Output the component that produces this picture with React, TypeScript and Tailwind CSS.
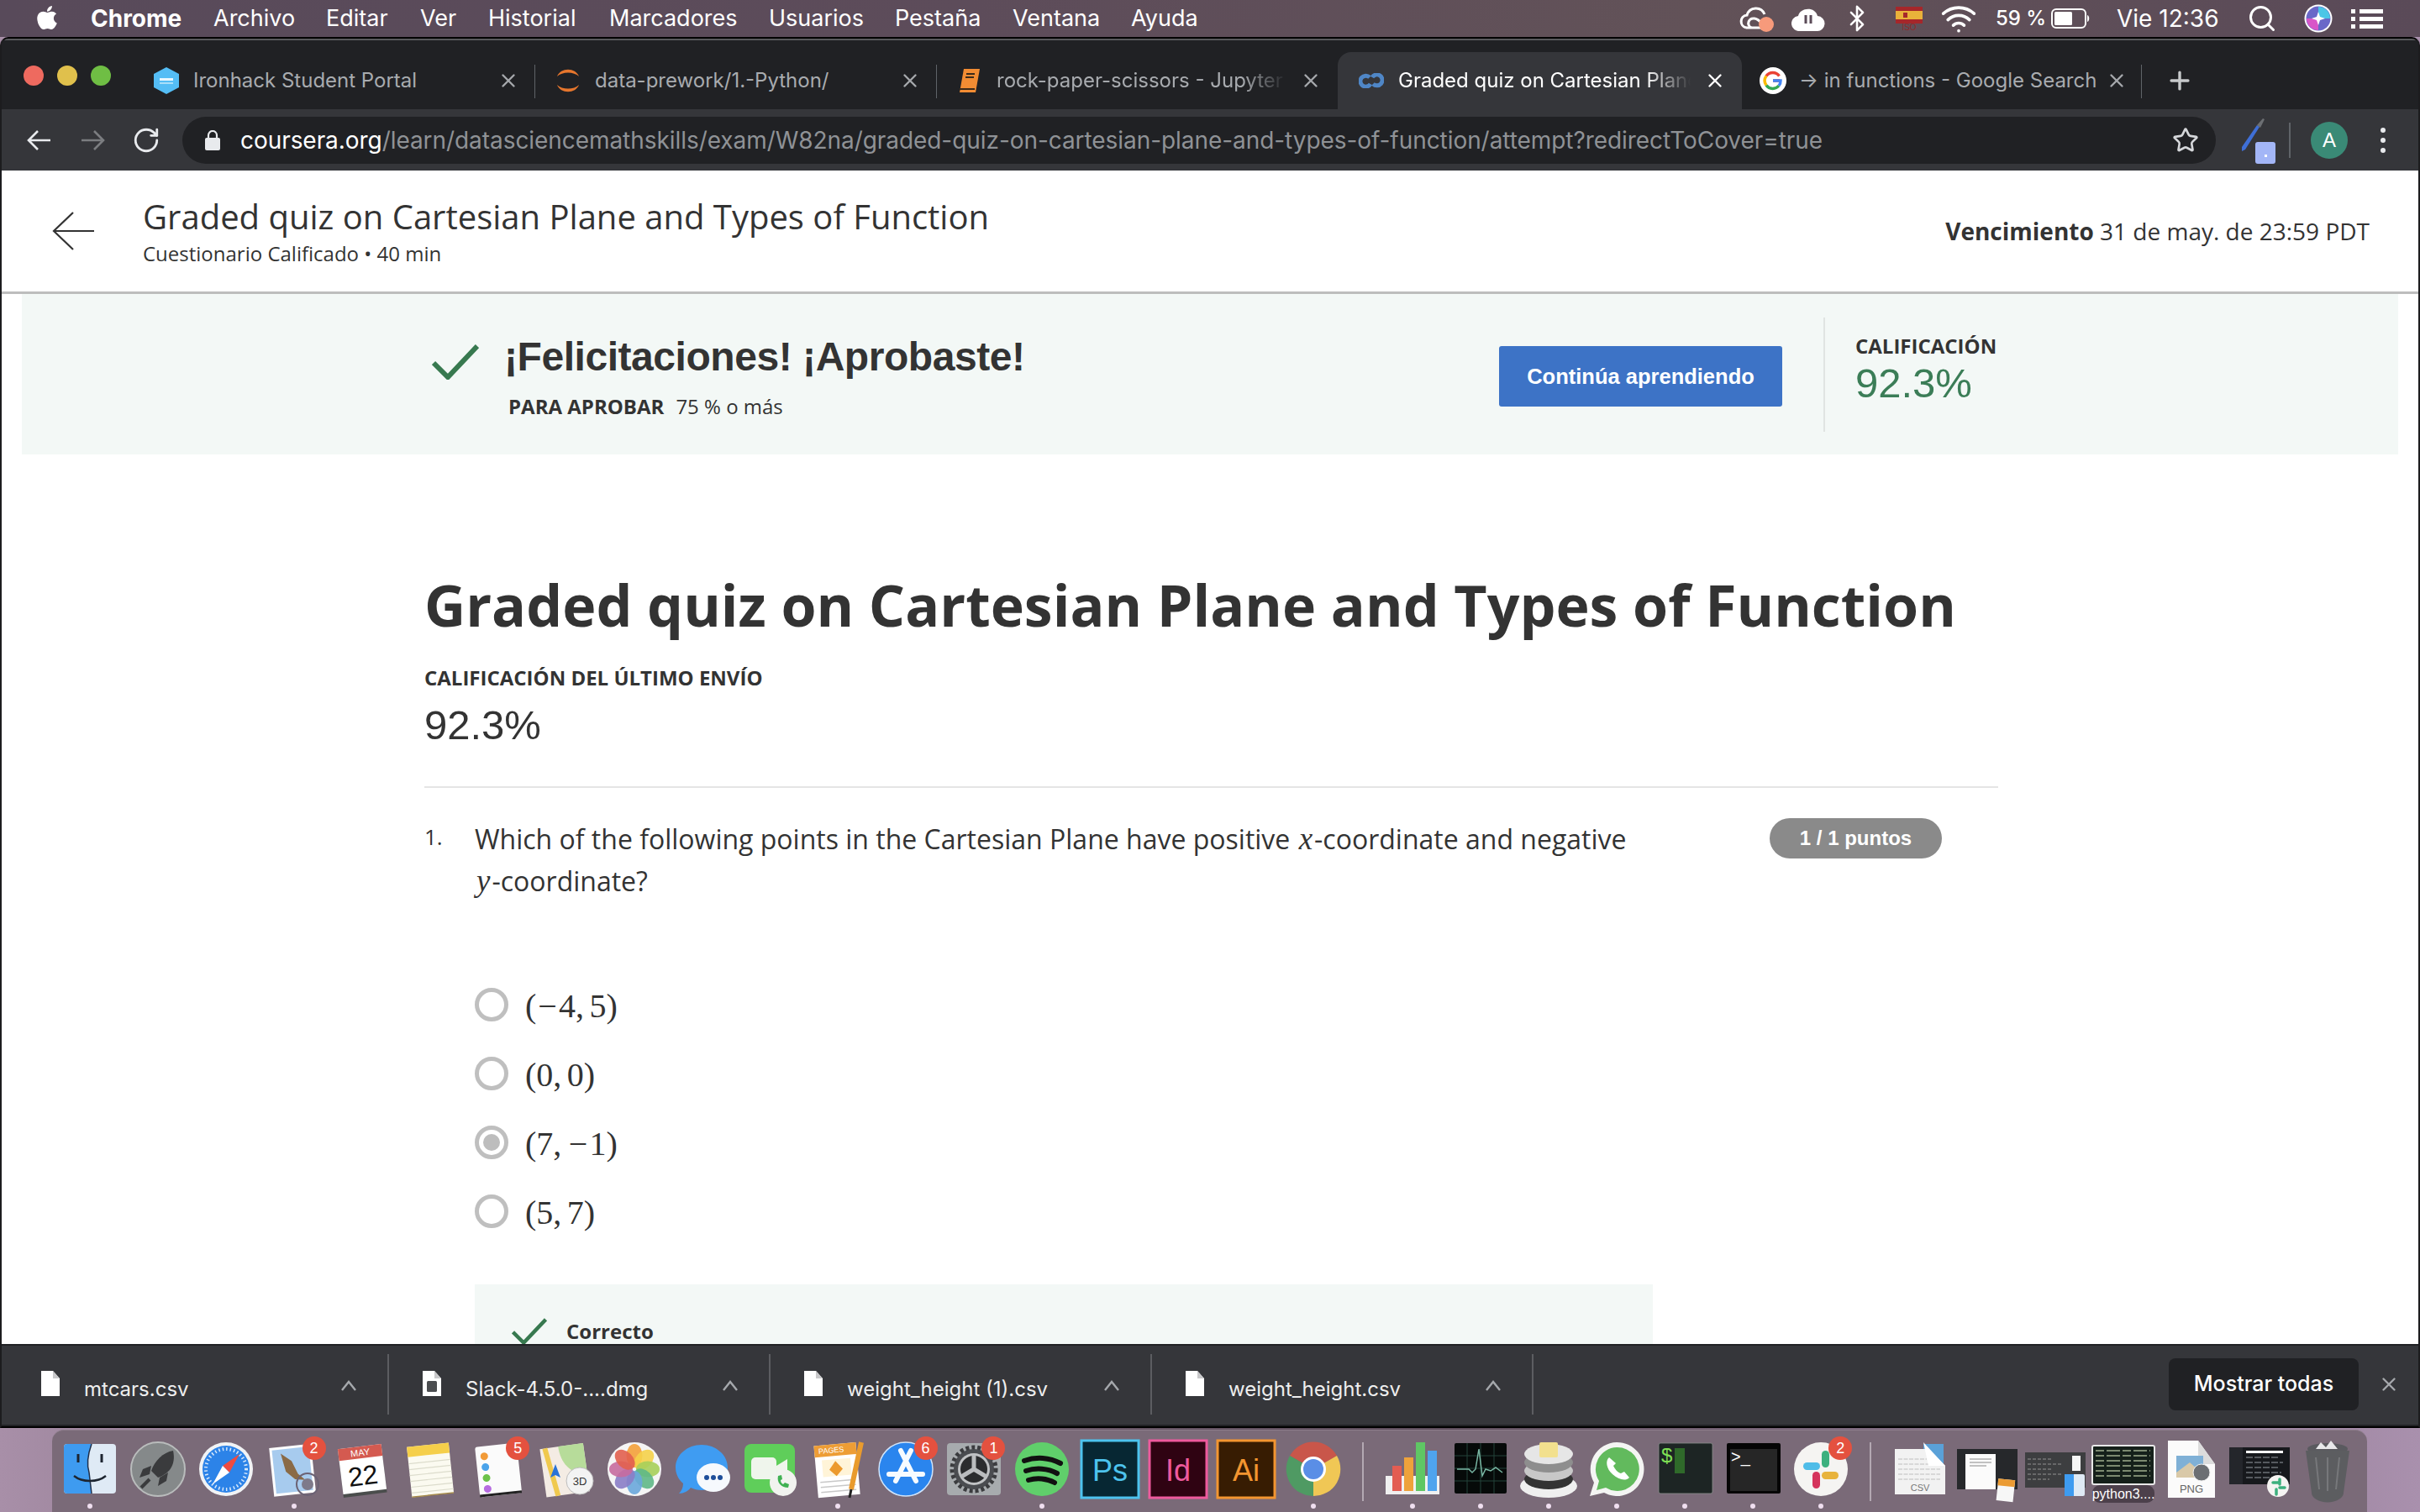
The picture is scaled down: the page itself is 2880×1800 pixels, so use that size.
import React from "react";
import { FaApple } from "react-icons/fa";
import { RotateCw, Star, Bluetooth, Wifi, Search, Plus } from "lucide-react";

const sf = "font-['Inter','Liberation_Sans',sans-serif]";
const open = "font-['Open_Sans',sans-serif]";
const arial = "font-['Liberation_Sans',Arial,sans-serif]";
const mathI = "font-['Liberation_Serif',serif] italic text-[37px] leading-[30px] mx-[2px]";

function CloseX({ light }: { light?: boolean }) {
  return (
    <svg width="20" height="20" viewBox="0 0 20 20" fill="none" stroke={light ? "#ffffff" : "#a5a8ac"} strokeWidth="2.4" strokeLinecap="round">
      <path d="M3.5 3.5 16.5 16.5M16.5 3.5 3.5 16.5" />
    </svg>
  );
}

function NavArrow({ color, flip }: { color: string; flip?: boolean }) {
  return (
    <svg width="28" height="24" viewBox="0 0 28 24" fill="none" stroke={color} strokeWidth="2.6" className={flip ? "scale-x-[-1]" : ""}>
      <path d="M13 1 2 12l11 11M2 12h26" />
    </svg>
  );
}

function Tab({ icon, title, active, divider, fade, iconWidth = 30, gap = 17, pad = 24, width = 478, close = 22 }: any) {
  return (
    <div className={`relative flex h-[68px] shrink-0 items-center ${active ? "rounded-t-[16px] bg-[#35363a] text-white" : "text-[#a8abaf]"}`} style={{ width, paddingLeft: pad, paddingRight: close }}>
      <div className="flex shrink-0 items-center justify-center" style={{ width: iconWidth, marginRight: gap }}>{icon}</div>
      <div className={`min-w-0 flex-1 overflow-hidden whitespace-nowrap text-[24px] ${sf} ${fade ? "[mask-image:linear-gradient(to_right,black_82%,transparent_97%)]" : ""}`}>{title}</div>
      <div className="ml-2 shrink-0"><CloseX light={active} /></div>
      {divider && <div className="absolute right-0 top-[15px] h-[40px] w-[1px] bg-[#5f6368]" />}
    </div>
  );
}

function FileIcon({ detail }: { detail?: boolean }) {
  return (
    <svg width="22" height="30" viewBox="0 0 22 30">
      <path d="M0 0H14L22 9V30H0Z" fill="#fff" />
      <path d="M14 0V9H22Z" fill="#c8c8ca" />
      {detail && <rect x="5" y="12" width="12" height="13" rx="1.5" fill="#4b4d50" />}
    </svg>
  );
}

function DownloadItem({ name, detail }: { name: string; detail?: boolean }) {
  return (
    <div className="flex h-[72px] w-[454px] shrink-0 items-center border-r-2 border-[#5c5d61] pl-[40px] pr-[36px]">
      <div className="mb-[2px] w-[22px] shrink-0"><FileIcon detail={detail} /></div>
      <div className={`ml-[29px] mt-[12px] flex-1 text-[24px] text-[#eeeeee] ${sf}`}>{name}</div>
      <svg width="20" height="13" viewBox="0 0 20 13" fill="none" stroke="#a5a8ac" strokeWidth="2.4" className="mt-[2px]"><path d="M2 12 10 2l8 10" /></svg>
    </div>
  );
}

function Minus() {
  return <span className="mx-[2px]">−</span>;
}

function Option({ label, checked }: { label: React.ReactNode; checked?: boolean }) {
  return (
    <div className="mb-[42px] flex h-10 items-center">
      <div className="flex h-10 w-10 shrink-0 items-center justify-center rounded-full border-[5px] border-[#bfbfbf]">
        {checked && <div className="h-5 w-5 rounded-full bg-[#bdbdbd]" />}
      </div>
      <div className="ml-[20px] mt-[3px] font-['Liberation_Serif',serif] text-[40px] leading-none text-[#333333] [word-spacing:-3.5px]">{label}</div>
    </div>
  );
}

function Check({ w, h, sw }: { w: number; h: number; sw: number }) {
  return (
    <svg width={w} height={h} viewBox="0 0 56 42" fill="none" stroke="#37794f" strokeWidth={sw}>
      <path d="M2 22 19 39 54 2" />
    </svg>
  );
}

function DockItem({ children, badge, dot }: { children: React.ReactNode; badge?: string; dot?: boolean }) {
  return (
    <div className="relative flex h-full w-[80.9px] shrink-0 justify-center pt-[10px]">
      <svg width="72" height="72" viewBox="0 0 72 72" className="overflow-visible">{children}</svg>
      {badge && (
        <div className={`absolute right-[3px] top-[7px] flex h-[28px] w-[28px] items-center justify-center rounded-full bg-[#e4513f] text-[18px] text-white ${arial}`}>{badge}</div>
      )}
      {dot && <div className="absolute bottom-[4px] left-1/2 h-[6px] w-[6px] -translate-x-1/2 rounded-full bg-[#f0dff0]" />}
    </div>
  );
}

function DockDivider() {
  return (
    <div className="flex h-full w-[37px] shrink-0 justify-center pt-[14px]">
      <div className="h-[70px] w-[2px] bg-[#b3a8b2]" />
    </div>
  );
}

const T = (p: any) => <text fontFamily="Liberation Sans, Arial, sans-serif" {...p} />;

export default function App() {
  return (
    <div className="flex h-[1800px] w-[2880px] flex-col overflow-hidden bg-[linear-gradient(90deg,#a88fa8_0%,#7a6678_20%,#5e4e5c_60%,#a990ad_100%)]">
      {/* macOS menu bar */}
      <div className={`flex h-[44px] shrink-0 items-center bg-[linear-gradient(90deg,#584a5a,#5d4c5a_40%,#625258_70%,#5a4a58)] text-[27px] text-white ${sf}`}>
        <div className="mb-[3px] ml-[40px] w-[30px]"><FaApple size={32} color="#fff" /></div>
        <div className="ml-[38px] w-[109px] text-[28px] font-bold">Chrome</div>
        <div className="ml-[37px] w-[96px]">Archivo</div>
        <div className="ml-[38px] w-[75px]">Editar</div>
        <div className="ml-[37px] w-[43px]">Ver</div>
        <div className="ml-[38px] w-[106px]">Historial</div>
        <div className="ml-[38px] w-[152px]">Marcadores</div>
        <div className="ml-[38px] w-[112px]">Usuarios</div>
        <div className="ml-[38px] w-[101px]">Pestaña</div>
        <div className="ml-[39px] w-[103px]">Ventana</div>
        <div className="ml-[38px] w-[79px]">Ayuda</div>
        <div className="ml-auto flex items-center pr-[44px]">
          <svg width="42" height="34" viewBox="0 0 42 34" fill="none" stroke="#fff" strokeWidth="3">
            <path d="M8 28C0 26 0 14 9 13 12 3 26 2 30 12" />
            <path d="M14 28c-6-4-3-12 4-11 6 1 8 6 10 8" />
            <path d="M8 28h20" />
            <circle cx="32" cy="24" r="9" fill="#f79a7b" stroke="none" />
          </svg>
          <svg width="40" height="30" viewBox="0 0 40 30" className="ml-[20px]">
            <path d="M10 30a9 9 0 0 1-2-18C10 2 28 0 31 12a9 9 0 0 1-1 18Z" fill="#fff" />
            <path d="M17 11v10M23 11v10" stroke="#5b4b58" strokeWidth="3" />
          </svg>
          <Bluetooth size={34} color="#fff" strokeWidth={1.8} className="ml-[21px]" />
          <div className="ml-[29px] flex w-[32px] flex-col items-center">
            <svg width="32" height="20" viewBox="0 0 32 20">
              <rect width="32" height="20" fill="#a6272a" />
              <rect y="5" width="32" height="10" fill="#e9b23a" />
              <rect x="9" y="7" width="5" height="6" fill="#a6272a" />
            </svg>
            <div className={`h-[8px] text-[10px] leading-[10px] text-[#8e2a2a] ${arial}`}>ISO</div>
          </div>
          <Wifi size={44} color="#fff" strokeWidth={2} className="ml-[21px]" />
          <div className="ml-[22px] w-[58px] whitespace-nowrap text-[24px] font-medium">59 %</div>
          <svg width="46" height="24" viewBox="0 0 46 24" className="ml-[8px]">
            <rect x="1" y="1" width="40" height="22" rx="5" fill="none" stroke="#fff" strokeWidth="2" />
            <rect x="4" y="4" width="21" height="16" rx="1.5" fill="#fff" />
            <path d="M43 8c3 1 3 7 0 8Z" fill="#fff" />
          </svg>
          <div className="ml-[32px] w-[119px] whitespace-nowrap text-[28px]">Vie 12:36</div>
          <Search size={36} color="#fff" strokeWidth={2} className="ml-[36px]" />
          <svg width="34" height="34" viewBox="0 0 34 34" className="ml-[32px]">
            <circle cx="17" cy="17" r="16.5" fill="#fff" />
            <circle cx="17" cy="17" r="14.5" fill="#6a68c8" />
            <path d="M17 3A14 14 0 0 1 31 17L17 17Z" fill="#4cc6e6" />
            <path d="M3 17A14 14 0 0 0 17 31L17 17Z" fill="#d856c8" />
            <path d="M17 9l2 6 6 2-6 2-2 6-2-6-6-2 6-2Z" fill="#fff" />
          </svg>
          <svg width="38" height="24" viewBox="0 0 38 24" fill="#fff" className="ml-[22px]">
            <rect x="0" y="1" width="5" height="5" /><rect x="10" y="1" width="28" height="5" />
            <rect x="0" y="10" width="5" height="5" /><rect x="10" y="10" width="28" height="5" />
            <rect x="0" y="19" width="5" height="5" /><rect x="10" y="19" width="28" height="5" />
          </svg>
        </div>
      </div>

      {/* Browser window */}
      <div className="flex h-[1656px] shrink-0 flex-col overflow-hidden rounded-t-[10px] border-x-2 border-y-2 border-x-[#1c1c1e] border-y-black bg-[#202124]">
        {/* tab strip */}
        <div className="flex h-[84px] shrink-0 items-end border-t-[2px] border-[#58595c] bg-[#202124]">
          <div className="flex h-[68px] w-[157px] shrink-0 items-center gap-[16px] pb-[12px] pl-[26px]">
            <div className="h-[24px] w-[24px] rounded-full bg-[#ee6a5f]" />
            <div className="h-[24px] w-[24px] rounded-full bg-[#e0c04c]" />
            <div className="h-[24px] w-[24px] rounded-full bg-[#6fbe44]" />
          </div>
          <Tab
            title="Ironhack Student Portal"
            divider
            icon={
              <svg width="30" height="32" viewBox="0 0 30 32">
                <path d="M15 0 30 8v16l-15 8L0 24V8Z" fill="#54bdf5" />
                <rect x="7" y="13" width="16" height="3" fill="#e8f7ff" />
                <rect x="7" y="18" width="16" height="2" fill="#a9def9" />
              </svg>
            }
          />
          <Tab
            title="data-prework/1.-Python/"
            divider
            icon={
              <svg width="30" height="32" viewBox="0 0 30 32" fill="#e6762d">
                <path d="M2 11C6 0 24 0 28 11 22 5 8 5 2 11Z" />
                <path d="M2 21C6 32 24 32 28 21 22 27 8 27 2 21Z" />
              </svg>
            }
          />
          <Tab
            title="rock-paper-scissors - Jupyter Notebook"
            fade
            width={477}
            icon={
              <svg width="26" height="30" viewBox="0 0 26 30">
                <path d="M6 1H25L20 29H1Z" fill="#f28c33" />
                <path d="M9 7h10M8 11h10" stroke="#3b2a1a" strokeWidth="2" />
                <path d="M1 25h18" stroke="#3b2a1a" strokeWidth="2" />
              </svg>
            }
          />
          <Tab
            active
            fade
            title="Graded quiz on Cartesian Plane and Types of Function"
            width={481}
            pad={25}
            icon={
              <svg width="30" height="18" viewBox="0 0 30 18" fill="none" stroke="#4f86c6" strokeWidth="5">
                <path d="M13 5a6.5 6.5 0 1 0 1 8M17 13a6.5 6.5 0 1 0-1-8" />
              </svg>
            }
          />
          <Tab
            title="→ in functions - Google Search"
            divider
            pad={21}
            iconWidth={32}
            gap={15}
            width={476}
            close={20}
            icon={
              <svg width="32" height="32" viewBox="0 0 32 32">
                <circle cx="16" cy="16" r="16" fill="#fff" />
                <path d="M24 16h-8M23.5 10.5A9.5 9.5 0 0 0 8 10.5" fill="none" stroke="#ea4335" strokeWidth="3.5" />
                <path d="M8 10.5a9.5 9.5 0 0 0 0 11" fill="none" stroke="#fbbc05" strokeWidth="3.5" />
                <path d="M8 21.5a9.5 9.5 0 0 0 15 .5" fill="none" stroke="#34a853" strokeWidth="3.5" />
                <path d="M23 22a9 9 0 0 0 2-6h-9" fill="none" stroke="#4285f4" strokeWidth="3.5" />
              </svg>
            }
          />
          <div className="flex h-[68px] items-center pl-[28px]"><Plus size={34} color="#c8cacc" strokeWidth={2.4} /></div>
        </div>
        {/* toolbar */}
        <div className="flex h-[73px] shrink-0 items-center bg-[#35363a]">
          <div className="ml-[30px]"><NavArrow color="#e8eaed" /></div>
          <div className="ml-[37px]"><NavArrow color="#7b7d80" flip /></div>
          <RotateCw size={34} color="#e8eaed" strokeWidth={2} className="ml-[32px]" />
          <div className={`ml-[26px] flex h-[56px] w-[2420px] shrink-0 items-center rounded-full bg-[#202124] pl-[27px] pr-[20px] ${sf}`}>
            <svg width="18" height="24" viewBox="0 0 18 24" fill="#e8eaed">
              <rect x="0" y="9" width="18" height="15" rx="2" />
              <path d="M4 10V6a5 5 0 0 1 10 0v4" fill="none" stroke="#e8eaed" strokeWidth="2.2" />
            </svg>
            <div className="ml-[24px] flex-1 whitespace-nowrap text-[28px] tracking-[-0.06px] text-[#8f9296]">
              <span className="text-white">coursera.org</span>/learn/datasciencemathskills/exam/W82na/graded-quiz-on-cartesian-plane-and-types-of-function/attempt?redirectToCover=true
            </div>
            <Star size={32} color="#d5d7da" strokeWidth={2} />
          </div>
          <svg width="44" height="56" viewBox="0 0 44 56" className="ml-[28px]">
            <path d="M3 36 21 10l3 2L7 39l-4 2Z" fill="#3f6fd6" />
            <path d="M21 10l7-8 2 1-5 10Z" fill="#6c6f73" />
            <rect x="19" y="30" width="24" height="26" rx="3" fill="#a3b6f7" />
            <rect x="30" y="45" width="3" height="3" fill="#fff" />
          </svg>
          <div className="ml-[15px] h-[42px] w-[2px] bg-[#5f6368]" />
          <div className={`ml-[24px] flex h-[44px] w-[44px] items-center justify-center rounded-full bg-[#3a8a76] text-[24px] text-white ${arial}`}>A</div>
          <div className="ml-[39px] flex flex-col gap-[6px]">
            <div className="h-[6px] w-[6px] rounded-full bg-[#e8eaed]" />
            <div className="h-[6px] w-[6px] rounded-full bg-[#e8eaed]" />
            <div className="h-[6px] w-[6px] rounded-full bg-[#e8eaed]" />
          </div>
        </div>

        {/* Page */}
        <div className={`h-[1397px] shrink-0 overflow-hidden bg-white text-[#333333] ${open}`}>
          {/* header */}
          <div className="flex h-[147px] items-center border-b-[3px] border-[#bdbdbd] pl-[60px] pr-[58px]">
            <svg width="50" height="46" viewBox="0 0 50 46" fill="none" stroke="#333" strokeWidth="2.2">
              <path d="M25 1 2 23l23 22M2 23h48" />
            </svg>
            <div className="ml-[58px] flex-1">
              <div className="text-[40px] leading-[50px]">Graded quiz on Cartesian Plane and Types of Function</div>
              <div className="mt-[3px] text-[24px] leading-[32px]">Cuestionario Calificado • 40 min</div>
            </div>
            <div className="text-[28px]"><span className="font-bold">Vencimiento</span> 31 de may. de 23:59 PDT</div>
          </div>
          {/* banner */}
          <div className="mx-[24px] flex h-[191px] items-center bg-[#f3f8f6] pl-[488px] pr-[446px]">
            <div className="mb-[30px] w-[56px] shrink-0"><Check w={56} h={42} sw={6} /></div>
            <div className="ml-[30px] flex-1">
              <div className={`mt-[4px] text-[48px] font-bold leading-[60px] tracking-[-0.45px] ${arial}`}>¡Felicitaciones! ¡Aprobaste!</div>
              <div className="ml-[5px] mt-[12px] text-[24px] leading-[34px]"><span className="font-bold">PARA APROBAR</span><span className="ml-[14px]">75 % o más</span></div>
            </div>
            <div className={`mt-[5px] flex h-[72px] w-[337px] shrink-0 items-center justify-center rounded-[3px] bg-[#3d73c6] text-[25.5px] font-bold text-white ${arial}`}>Continúa aprendiendo</div>
            <div className="ml-[49px] h-[136px] w-[2px] shrink-0 bg-[#e0e4e2]" />
            <div className="mb-[14px] ml-[36px] w-[200px] shrink-0">
              <div className="text-[24px] font-bold leading-[32px]">CALIFICACIÓN</div>
              <div className={`mt-[3px] text-[49px] leading-[50px] text-[#3b7d57] ${arial}`}>92.3%</div>
            </div>
          </div>
          {/* main */}
          <div className="pl-[503px] pr-[500px]">
            <div className="mt-[134px] whitespace-nowrap text-[68px] font-bold leading-[90px]">Graded quiz on Cartesian Plane and Types of Function</div>
            <div className="mt-[25px] text-[24px] font-bold leading-[34px]">CALIFICACIÓN DEL ÚLTIMO ENVÍO</div>
            <div className={`mt-[9px] text-[49px] leading-[60px] ${arial}`}>92.3%</div>
            <div className="mt-[43px] h-[2px] bg-[#e5e5e5]" />
            <div className="mt-[36px] flex items-start">
              <div className="mt-[-3px] w-[60px] shrink-0 text-[26px] leading-[50px]">1.</div>
              <div className="w-[1402px] shrink-0 text-[32px] leading-[50px]">
                Which of the following points in the Cartesian Plane have positive <i className={mathI}>x</i>-coordinate and negative <span className="whitespace-nowrap"><i className={mathI}>y</i>-coordinate?</span>
              </div>
              <div className={`ml-[139px] flex h-[48px] w-[205px] shrink-0 items-center justify-center rounded-full bg-[#8a8a8a] text-[24px] font-bold text-white ${arial}`}>1 / 1 puntos</div>
            </div>
            <div className="ml-[60px] mt-[102px]">
              <Option label={<>(<Minus />4, 5)</>} />
              <Option label="(0, 0)" />
              <Option label={<>(7, <Minus />1)</>} checked />
              <Option label="(5, 7)" />
              <div className="mt-[67px] flex h-[120px] w-[1402px] items-start bg-[#f3f8f6] pl-[44px] pt-[40px]">
                <Check w={42} h={32} sw={6} />
                <div className="ml-[23px] text-[24px] font-bold leading-[32px]">Correcto</div>
              </div>
            </div>
          </div>
        </div>

        {/* Download bar */}
        <div className="flex h-[96px] shrink-0 items-center border-t-2 border-[#202124] bg-[#35363a] pb-[2px]">
          <div className="w-[7px]" />
          <DownloadItem name="mtcars.csv" />
          <DownloadItem name="Slack-4.5.0-....dmg" detail />
          <DownloadItem name="weight_height (1).csv" />
          <DownloadItem name="weight_height.csv" />
          <div className={`ml-auto flex h-[62px] w-[226px] items-center justify-center rounded-[8px] bg-[#202124] text-[25px] font-medium text-white ${sf}`}>Mostrar todas</div>
          <div className="ml-[26px] mr-[25px]"><CloseX /></div>
        </div>
      </div>

      {/* Dock */}
      <div className="ml-[62px] mr-[63px] mt-[2px] flex h-[98px] shrink-0 overflow-hidden rounded-t-[14px] border-t border-[#8d7d8b] bg-[#7a6a78] pl-[5px]">
        <DockItem dot>
          <rect x="5" y="6" width="62" height="59" rx="4" fill="#dfeaf5" />
          <path d="M9 6H38C33 20 32 30 35 40L38 65H9a4 4 0 0 1-4-4V10a4 4 0 0 1 4-4Z" fill="#3e9bf0" />
          <path d="M38 6C33 20 32 30 35 40L38 65" stroke="#1f2f4a" strokeWidth="1.5" fill="none" />
          <path d="M22 18v10M50 18v10" stroke="#1d2530" strokeWidth="3" />
          <path d="M17 44c10 8 28 8 38 0" stroke="#1d2530" strokeWidth="2.5" fill="none" />
        </DockItem>
        <DockItem>
          <circle cx="36" cy="36" r="32" fill="#85898a" />
          <circle cx="36" cy="36" r="32" fill="none" stroke="#b9bcbc" strokeWidth="2" />
          <path d="M54 14C42 16 32 26 28 38l8 8c12-4 22-14 18-32Z" fill="#3a3b3d" />
          <path d="M28 32l-10 4-4 10 12-4ZM38 46l-2 10 10-6 2-10Z" fill="#3a3b3d" />
          <path d="M26 48 16 58" stroke="#3a3b3d" strokeWidth="4" />
        </DockItem>
        <DockItem>
          <circle cx="36" cy="36" r="32" fill="#f1f3f5" />
          <circle cx="36" cy="36" r="28" fill="#2c83e8" />
          <circle cx="36" cy="36" r="24" fill="none" stroke="#d7e8fb" strokeWidth="4" strokeDasharray="1.5 3" />
          <path d="M52 18 32 32 40 40Z" fill="#ef4b40" />
          <path d="M20 54 32 32 40 40Z" fill="#fff" />
        </DockItem>
        <DockItem badge="2" dot>
          <g transform="rotate(-6 36 36)">
            <rect x="9" y="8" width="50" height="58" fill="#fdfdfd" />
            <rect x="12" y="11" width="44" height="52" fill="#a7cbee" />
            <path d="M22 16 34 26 40 42 48 50 36 48 26 38Z" fill="#8a6a46" />
          </g>
          <circle cx="52" cy="54" r="13" fill="none" stroke="#6b6274" strokeWidth="2" />
          <circle cx="52" cy="54" r="7" fill="#7e7a8a" />
        </DockItem>
        <DockItem>
          <g transform="rotate(-7 36 36)">
            <rect x="10" y="11" width="52" height="56" fill="#4a4d4c" />
            <rect x="10" y="9" width="52" height="54" fill="#fff" />
            <rect x="10" y="9" width="52" height="14" fill="#d45a50" />
            <T x="36" y="20" fontSize="11" fill="#fff" textAnchor="middle">MAY</T>
            <T x="36" y="55" fontSize="32" fill="#111" textAnchor="middle">22</T>
          </g>
        </DockItem>
        <DockItem>
          <g transform="rotate(-6 36 36)">
            <rect x="11" y="7" width="50" height="60" fill="#fbfaf0" />
            <rect x="11" y="7" width="50" height="12" fill="#f5cf4a" />
            <path d="M11 27H61M11 34H61M11 41H61M11 48H61M11 55H61M11 62H61" stroke="#dcdccc" strokeWidth="1.2" />
            <rect x="11" y="66" width="50" height="1.5" fill="#a58a4a" />
          </g>
        </DockItem>
        <DockItem badge="5">
          <g transform="rotate(-6 36 36)">
            <rect x="11" y="7" width="50" height="60" rx="3" fill="#fbfbfb" />
            <rect x="11" y="64" width="50" height="3" fill="#222" />
            <circle cx="21" cy="19" r="4.5" fill="#f29b38" />
            <circle cx="21" cy="32" r="4.5" fill="#4aa3ea" />
            <circle cx="21" cy="45" r="4.5" fill="#6cc24a" />
            <circle cx="21" cy="58" r="4.5" fill="#b66be0" />
          </g>
        </DockItem>
        <DockItem>
          <g transform="rotate(-8 36 36)">
            <rect x="8" y="8" width="52" height="58" fill="#f4ece4" />
            <path d="M30 8H60V44C42 44 30 30 30 8Z" fill="#b7dc9a" />
            <path d="M14 8 22 66" stroke="#f0c94e" strokeWidth="6" />
          </g>
          <path d="M23 30l6 16-6-3-6 3Z" fill="#2a73d6" />
          <circle cx="52" cy="50" r="16" fill="#f3f3f3" stroke="#bcbcbc" />
          <T x="52" y="55" fontSize="13" fill="#333" textAnchor="middle">3D</T>
        </DockItem>
        <DockItem>
          <circle cx="36" cy="36" r="32" fill="#f5f5f5" />
          {[["#f4a13a", 0], ["#f5d24a", 45], ["#a7cf5a", 90], ["#5fb887", 135], ["#6aa7dc", 180], ["#8a7dc6", 225], ["#c76b9e", 270], ["#e2604f", 315]].map(([c, a]) => (
            <ellipse key={a as number} cx="36" cy="20" rx="9.5" ry="14" fill={c as string} opacity="0.9" transform={`rotate(${a} 36 36)`} />
          ))}
        </DockItem>
        <DockItem>
          <path d="M36 7c17 0 31 12 31 27S53 61 36 61c-5 0-9-1-13-3-3 4-8 7-14 7 3-3 5-7 5-12C8 48 5 41 5 34 5 19 19 7 36 7Z" fill="#3f9cf2" />
          <ellipse cx="50" cy="46" rx="20" ry="17" fill="#f6f9fd" />
          <circle cx="42" cy="46" r="3" fill="#1d4e9a" />
          <circle cx="50" cy="46" r="3" fill="#1d4e9a" />
          <circle cx="58" cy="46" r="3" fill="#1d4e9a" />
        </DockItem>
        <DockItem>
          <rect x="6" y="6" width="60" height="58" rx="8" fill="#5fce5a" />
          <rect x="14" y="22" width="30" height="26" rx="5" fill="#eff5ec" />
          <path d="M44 32l13-8v22l-13-8Z" fill="#eff5ec" />
          <circle cx="52" cy="52" r="16" fill="#f1f3ef" />
          <path d="M46 44c-2 8 4 14 12 14l1-4-5-2-2 2c-2-1-3-3-3-5l2-1-1-5Z" fill="#3fb152" />
        </DockItem>
        <DockItem dot>
          <g transform="rotate(-5 36 36)">
            <rect x="10" y="6" width="50" height="62" fill="#fff" />
            <rect x="10" y="6" width="50" height="14" fill="#ed9d35" />
            <T x="15" y="16" fontSize="9" fill="#fff">PAGES</T>
            <path d="M18 24h34v20H18Z" fill="#fff4d8" />
            <path d="M34 26l8 10-8 8-8-8Z" fill="#ec9a2e" />
            <path d="M14 50h42M14 56h42M14 62h42" stroke="#c8c8c8" strokeWidth="1.5" />
          </g>
          <path d="M64 4 52 60" stroke="#e99b2d" strokeWidth="6" />
          <path d="M52 60l-2 10" stroke="#222" strokeWidth="3" />
        </DockItem>
        <DockItem badge="6">
          <circle cx="36" cy="36" r="32" fill="#2a85ee" stroke="#cfe4fb" strokeWidth="1.5" />
          <path d="M42 14 24 50M30 14 48 50M16 42h40" stroke="#f6fbff" strokeWidth="6" strokeLinecap="round" />
        </DockItem>
        <DockItem badge="1">
          <rect x="4" y="5" width="64" height="62" rx="4" fill="#a7abae" />
          <circle cx="36" cy="36" r="24" fill="#4a4c50" />
          <circle cx="36" cy="36" r="26" fill="none" stroke="#3b3c3f" strokeWidth="5" strokeDasharray="4 3" />
          <circle cx="36" cy="36" r="19" fill="#c0c2c4" />
          <circle cx="36" cy="36" r="16" fill="#2b2c2e" />
          <path d="M36 36V19M36 36 21 45M36 36 51 45" stroke="#babcbe" strokeWidth="5" />
        </DockItem>
        <DockItem dot>
          <circle cx="36" cy="36" r="32" fill="#60cf6b" />
          <path d="M15 26c14-5 30-4 43 3M17 38c12-4 26-3 37 3M20 49c10-3 22-2 31 3" fill="none" stroke="#111" strokeWidth="6" strokeLinecap="round" />
        </DockItem>
        <DockItem>
          <rect x="2" y="2" width="68" height="68" fill="#072733" stroke="#4dc3ee" strokeWidth="3" />
          <T x="36" y="50" fontSize="36" fill="#4dc3ee" textAnchor="middle">Ps</T>
        </DockItem>
        <DockItem>
          <rect x="2" y="2" width="68" height="68" fill="#2f0312" stroke="#ee5a9d" strokeWidth="3" />
          <T x="36" y="50" fontSize="36" fill="#ee5a9d" textAnchor="middle">Id</T>
        </DockItem>
        <DockItem>
          <rect x="2" y="2" width="68" height="68" fill="#371c02" stroke="#f39530" strokeWidth="3" />
          <T x="36" y="50" fontSize="36" fill="#f39530" textAnchor="middle">Ai</T>
        </DockItem>
        <DockItem dot>
          <path d="M36 36 8 20A32 32 0 0 1 64 20Z" fill="#c9564a" />
          <path d="M36 36 64 20A32 32 0 0 1 36 68Z" fill="#f0c755" />
          <path d="M36 36 36 68A32 32 0 0 1 8 20Z" fill="#4f9a63" />
          <circle cx="36" cy="36" r="15" fill="#fff" />
          <circle cx="36" cy="36" r="12" fill="#5a8ee6" />
        </DockItem>
        <DockDivider />
        <DockItem dot>
          <path d="M4 44H68V66H4Z" fill="#f0f0f0" />
          <rect x="12" y="32" width="11" height="30" fill="#e35d52" />
          <rect x="26" y="22" width="11" height="40" fill="#eea23b" />
          <rect x="40" y="4" width="11" height="58" fill="#5fc764" />
          <rect x="54" y="14" width="11" height="48" fill="#4fa4ee" />
        </DockItem>
        <DockItem dot>
          <rect x="5" y="5" width="62" height="60" rx="2" fill="#060a09" />
          <path d="M5 20H67M5 35H67M5 50H67M20 5V65M36 5V65M52 5V65" stroke="#23423a" strokeWidth="1" />
          <path d="M8 36h14l4 4 4-4 4-24 4 32 4-8 6 2 6-4 8 6" fill="none" stroke="#79b7a4" strokeWidth="1.5" />
        </DockItem>
        <DockItem dot>
          <ellipse cx="36" cy="56" rx="34" ry="14" fill="#efefef" />
          <ellipse cx="36" cy="48" rx="29" ry="12" fill="#333" />
          <ellipse cx="36" cy="38" rx="29" ry="12" fill="#c8c8c8" />
          <ellipse cx="36" cy="28" rx="29" ry="12" fill="#8e8e8e" />
          <ellipse cx="36" cy="18" rx="29" ry="12" fill="#e6e6e6" />
          <rect x="25" y="4" width="22" height="18" rx="2" fill="#f2e08e" />
        </DockItem>
        <DockItem dot>
          <path d="M36 4a32 32 0 1 1-15 60L4 68l5-16A32 32 0 0 1 36 4Z" fill="#f4f5f3" />
          <path d="M36 10a26 26 0 1 1-13 48L12 61l3-11A26 26 0 0 1 36 10Z" fill="#62ba5d" />
          <path d="M27 22c-5 4-3 14 4 20s15 9 20 4l-6-7-4 2c-4-1-7-5-9-9l3-3Z" fill="#fff" />
        </DockItem>
        <DockItem dot>
          <rect x="5" y="5" width="64" height="60" rx="2" fill="#1d2524" stroke="#8a8f8e" strokeWidth="0.8" />
          <T x="8" y="28" fontSize="24" fill="#7fe055">$</T>
          <rect x="24" y="11" width="12" height="30" fill="#2f6a2a" />
        </DockItem>
        <DockItem dot>
          <rect x="5" y="5" width="64" height="60" rx="2" fill="#050505" />
          <rect x="9" y="12" width="56" height="50" fill="#262626" />
          <T x="10" y="28" fontSize="20" fill="#fff">&gt;_</T>
        </DockItem>
        <DockItem badge="2" dot>
          <circle cx="36" cy="36" r="32" fill="#f5f4f2" />
          <rect x="15" y="28" width="20" height="9" rx="4.5" fill="#4fbce8" />
          <rect x="37" y="14" width="9" height="20" rx="4.5" fill="#3db07e" />
          <rect x="37" y="39" width="20" height="9" rx="4.5" fill="#e8b33d" />
          <rect x="26" y="39" width="9" height="20" rx="4.5" fill="#d5345c" />
        </DockItem>
        <DockDivider />
        <DockItem>
          <rect x="40" y="6" width="24" height="50" fill="#5aa1d8" />
          <path d="M6 12H46L66 32V66H6Z" fill="#f2f2f2" />
          <path d="M10 24H44M10 30H60M10 36H60M10 42H60M10 48H60" stroke="#cfcfcf" strokeWidth="1.5" strokeDasharray="5 1.5" />
          <path d="M40 4 66 32H46Z" fill="#fff" />
          <T x="36" y="62" fontSize="11" fill="#777" textAnchor="middle">CSV</T>
        </DockItem>
        <DockItem>
          <rect x="0" y="12" width="72" height="48" fill="#26282b" />
          <rect x="10" y="18" width="36" height="42" fill="#fbfbfb" />
          <path d="M15 24h26M15 28h26M15 32h20" stroke="#888" />
          <g transform="rotate(6 56 60)">
            <rect x="48" y="48" width="20" height="26" fill="#f7f7f7" />
            <rect x="48" y="48" width="20" height="8" fill="#eb9b33" />
          </g>
        </DockItem>
        <DockItem>
          <rect x="0" y="16" width="72" height="42" fill="#3d3e40" />
          <path d="M3 24h28M3 30h40M3 36h30M3 42h40M3 48h26" stroke="#777" strokeWidth="1.5" strokeDasharray="4 2" />
          <rect x="56" y="20" width="10" height="18" fill="#f6f6f6" />
          <rect x="47" y="42" width="24" height="26" rx="2" fill="#dfeaf5" />
          <path d="M47 42H58V68H47Z" fill="#3e9bf0" />
        </DockItem>
        <DockItem>
          <rect x="-1" y="8" width="74" height="46" rx="2" fill="#15201a" stroke="#e8e8e8" strokeWidth="2" />
          <path d="M3 14H68M3 20H68M3 26H68M3 32H68M3 38H68M3 44H68" stroke="#7c8a70" strokeWidth="2" strokeDasharray="10 3 16 3" />
          <rect x="-1" y="55" width="74" height="21" rx="9" fill="#4c404b" />
          <T x="36" y="71" fontSize="16" fill="#fff" textAnchor="middle">python3....</T>
        </DockItem>
        <DockItem>
          <path d="M8 2H44L64 30V70H8Z" fill="#fbfbfb" />
          <path d="M44 2 64 30H44Z" fill="#dcdcdc" />
          <rect x="18" y="20" width="32" height="26" fill="#7fb0d6" />
          <path d="M18 40 34 28l16 14v4H18Z" fill="#d9c9a8" />
          <circle cx="48" cy="40" r="10" fill="#6c6f73" stroke="#eee" />
          <T x="36" y="64" fontSize="13" fill="#666" textAnchor="middle">PNG</T>
        </DockItem>
        <DockItem>
          <rect x="0" y="10" width="72" height="44" fill="#17191d" />
          <rect x="0" y="10" width="16" height="44" fill="#24262b" />
          <rect x="20" y="14" width="44" height="3" fill="#fff" />
          <path d="M20 22h40M20 28h44M20 34h38M20 40h42M20 46h34" stroke="#6c7076" strokeWidth="1.5" strokeDasharray="8 2" />
          <circle cx="58" cy="56" r="13" fill="#f5f4f2" />
          <path d="M52 52h6M60 48v6M60 58h6M56 60v6" strokeWidth="3.5" strokeLinecap="round" stroke="#3db07e" />
        </DockItem>
        <DockItem>
          <ellipse cx="36" cy="12" rx="24" ry="7" fill="#5a5a5f" />
          <path d="M22 12l6-8 6 6 6-8 8 10Z" fill="#e8e8ea" />
          <path d="M10 14H62L55 64a10 6 0 0 1-38 0Z" fill="#5c5d60" />
          <path d="M22 22 26 60M36 22V62M50 22 46 60" stroke="#77787b" strokeWidth="2" />
        </DockItem>
      </div>
    </div>
  );
}
